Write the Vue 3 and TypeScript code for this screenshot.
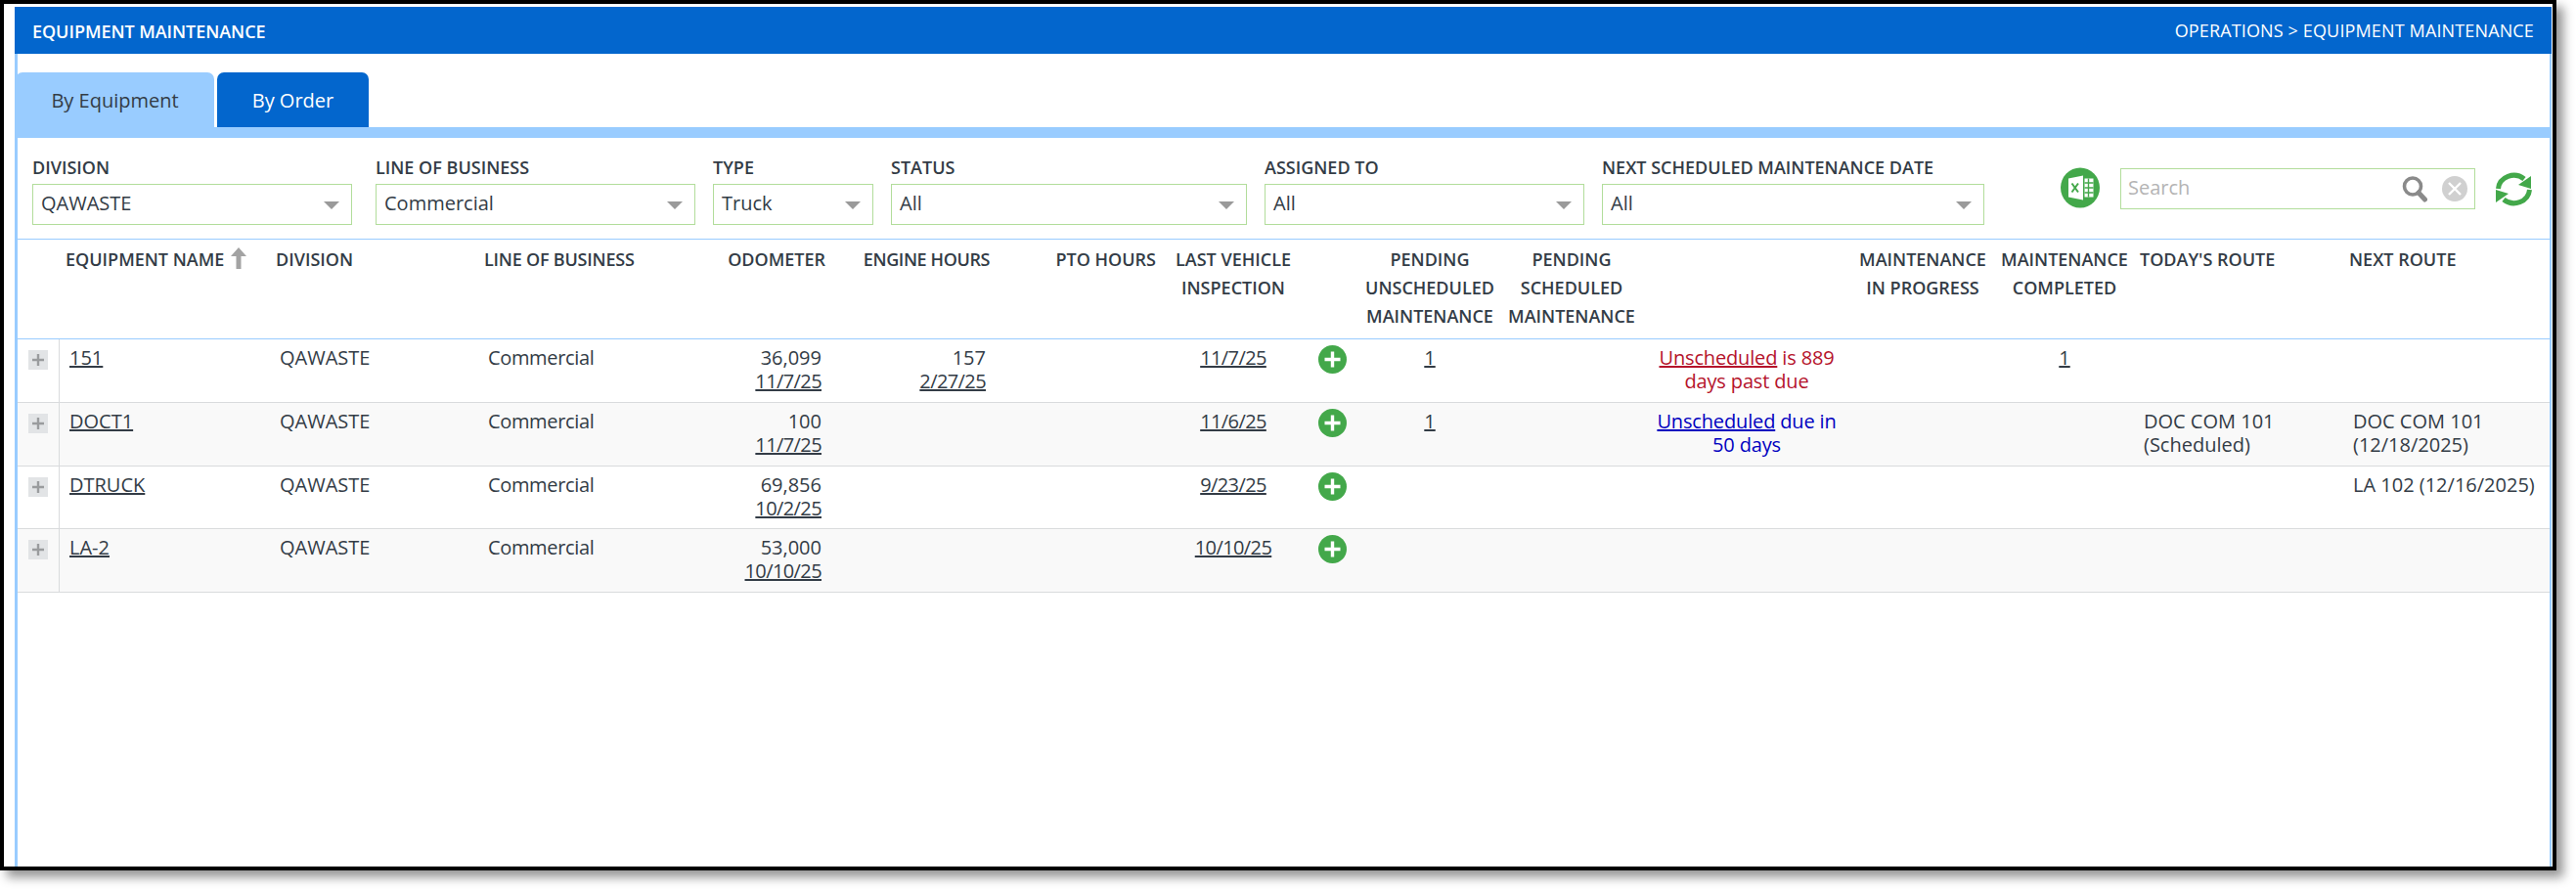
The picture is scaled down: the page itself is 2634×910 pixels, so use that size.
<script setup lang="ts">
interface Filter { label: string; value: string; cls: string }
interface Row {
  name: string; odometer: string; odoDate: string; engine?: string; engineDate?: string;
  inspection: string; pending?: string; linkText?: string; restText?: string; tone?: string;
  completed?: string; today?: string; next?: string;
}
const filters: Filter[] = [
  { label: 'DIVISION', value: 'QAWASTE', cls: 'f-division' },
  { label: 'LINE OF BUSINESS', value: 'Commercial', cls: 'f-wide' },
  { label: 'TYPE', value: 'Truck', cls: 'f-type' },
  { label: 'STATUS', value: 'All', cls: 'f-status' },
  { label: 'ASSIGNED TO', value: 'All', cls: 'f-wide' },
  { label: 'NEXT SCHEDULED MAINTENANCE DATE', value: 'All', cls: 'f-date' },
];
const rows: Row[] = [
  { name: '151', odometer: '36,099', odoDate: '11/7/25', engine: '157', engineDate: '2/27/25', inspection: '11/7/25', pending: '1', linkText: 'Unscheduled', restText: ' is 889 days past due', tone: 'late', completed: '1' },
  { name: 'DOCT1', odometer: '100', odoDate: '11/7/25', inspection: '11/6/25', pending: '1', linkText: 'Unscheduled', restText: ' due in 50 days', tone: 'soon', today: 'DOC COM 101 (Scheduled)', next: 'DOC COM 101 (12/18/2025)' },
  { name: 'DTRUCK', odometer: '69,856', odoDate: '10/2/25', inspection: '9/23/25', next: 'LA 102 (12/16/2025)' },
  { name: 'LA-2', odometer: '53,000', odoDate: '10/10/25', inspection: '10/10/25' },
];
</script>

<template>
  <div class="page">
    <div class="frame">
      <header class="titlebar">
        <span class="title">EQUIPMENT MAINTENANCE</span>
        <span class="crumb">OPERATIONS &gt; EQUIPMENT MAINTENANCE</span>
      </header>
      <main class="panel">
        <nav class="tabs">
          <div class="tab tab-active">By Equipment</div>
          <div class="tab">By Order</div>
        </nav>
        <div class="strip"></div>
        <section class="filters">
          <div v-for="f in filters" :key="f.label" class="filter" :class="f.cls">
            <label class="flabel">{{ f.label }}</label>
            <div class="select"><span class="sval">{{ f.value }}</span><i class="caret"></i></div>
          </div>
          <div class="tools">
            <svg class="excel" viewBox="0 0 40 42" width="40" height="42">
              <ellipse cx="20" cy="21" rx="20" ry="20.5" fill="#43a84a" />
              <path d="M8 11.5 L23 8.5 V33.5 L8 30.5 Z" fill="#fff" />
              <rect x="24.5" y="11.5" width="9" height="19" fill="#fff" />
              <path d="M24.5 16h9M24.5 21h9M24.5 26h9M28.5 11.5v19" stroke="#43a84a" stroke-width="1.4" />
              <path d="M11.5 16.5 L18 25.5 M18 16.5 L11.5 25.5" stroke="#43a84a" stroke-width="2" fill="none" />
            </svg>
            <div class="search">
              <span class="placeholder">Search</span>
              <svg class="mag" viewBox="0 0 26 28" width="26" height="28">
                <circle cx="11" cy="11.5" r="8.5" fill="none" stroke="#8a8a8a" stroke-width="3.6" />
                <path d="M17 18 L23.5 25" stroke="#8a8a8a" stroke-width="5" stroke-linecap="round" />
              </svg>
              <svg class="clear" viewBox="0 0 26 26" width="26" height="26">
                <circle cx="13" cy="13" r="13" fill="#d0d0d0" />
                <path d="M7 7 L19 19 M19 7 L7 19" stroke="#fff" stroke-width="2.4" />
              </svg>
            </div>
            <svg class="refresh" viewBox="0 0 37 35" width="37" height="35">
              <path d="M2.5 17 A16 15 0 0 1 29 7" fill="none" stroke="#43a84a" stroke-width="5" />
              <path d="M36 4 V17 L23 13 Z" fill="#43a84a" />
              <path d="M34.5 18 A16 15 0 0 1 8 28" fill="none" stroke="#43a84a" stroke-width="5" />
              <path d="M0 31 V18 L13 22 Z" fill="#43a84a" />
            </svg>
          </div>
        </section>
        <table class="grid">
          <colgroup>
            <col style="width:43px" /><col style="width:214px" /><col style="width:213px" /><col style="width:212px" />
            <col style="width:151px" /><col style="width:168px" /><col style="width:170px" /><col style="width:144px" />
            <col style="width:58px" /><col style="width:142px" /><col style="width:148px" /><col style="width:210px" />
            <col style="width:150px" /><col style="width:140px" /><col style="width:214px" /><col style="width:212px" />
          </colgroup>
          <thead>
            <tr>
              <th></th>
              <th class="sorted">EQUIPMENT NAME
                <svg class="sort" viewBox="0 0 16 22" width="16" height="22"><path d="M8 0 L16 9 H10.5 V22 H5.5 V9 H0 Z" fill="#a3a3a3" /></svg>
              </th>
              <th>DIVISION</th>
              <th class="th-lob">LINE OF BUSINESS</th>
              <th class="r">ODOMETER</th>
              <th class="r th-engine">ENGINE HOURS</th>
              <th class="r">PTO HOURS</th>
              <th class="c">LAST VEHICLE INSPECTION</th>
              <th></th>
              <th class="c">PENDING UNSCHEDULED MAINTENANCE</th>
              <th class="c">PENDING SCHEDULED MAINTENANCE</th>
              <th></th>
              <th class="c">MAINTENANCE IN PROGRESS</th>
              <th class="c">MAINTENANCE COMPLETED</th>
              <th>TODAY'S ROUTE</th>
              <th>NEXT ROUTE</th>
            </tr>
          </thead>
          <tbody>
            <tr v-for="(r, i) in rows" :key="r.name" :class="{ alt: i % 2 === 1, short: i === 2 }">
              <td class="exp">
                <span class="expander"><svg viewBox="0 0 20 20" width="20" height="20"><path d="M10 4 V16 M4 10 H16" stroke="#9a9c9e" stroke-width="2.4" /></svg></span>
              </td>
              <td class="name"><a class="u">{{ r.name }}</a></td>
              <td>QAWASTE</td>
              <td class="tight">Commercial</td>
              <td class="r">{{ r.odometer }}<br /><a class="u date">{{ r.odoDate }}</a></td>
              <td class="r"><template v-if="r.engine">{{ r.engine }}<br /><a class="u date">{{ r.engineDate }}</a></template></td>
              <td></td>
              <td class="c"><a class="u date">{{ r.inspection }}</a></td>
              <td class="c icon">
                <svg viewBox="0 0 29 29" width="29" height="29"><circle cx="14.5" cy="14.5" r="14.5" fill="#43a84a" /><path d="M14.5 6.5 V22.5 M6.5 14.5 H22.5" stroke="#fff" stroke-width="3.4" /></svg>
              </td>
              <td class="c"><a v-if="r.pending" class="u">{{ r.pending }}</a></td>
              <td></td>
              <td class="c msg" :class="r.tone"><template v-if="r.linkText"><a class="u">{{ r.linkText }}</a>{{ r.restText }}</template></td>
              <td></td>
              <td class="c"><a v-if="r.completed" class="u">{{ r.completed }}</a></td>
              <td>{{ r.today }}</td>
              <td>{{ r.next }}</td>
            </tr>
          </tbody>
        </table>
      </main>
    </div>
  </div>
</template>

<style>
html, body { margin: 0; background: #fff; }
</style>

<style scoped>
.page { width: 2634px; height: 910px; background: #fff; overflow: hidden; font-family: "Open Sans", "Noto Sans", sans-serif; color: #333c46; }
.frame {
  box-sizing: border-box; width: 2614px; height: 890px; border: 4px solid #000;
  padding: 3px 1px 0 11px; background: #fff; display: flex; flex-direction: column;
  box-shadow: 7px 7px 10px rgba(0, 0, 0, .42);
}
.titlebar { height: 48px; flex: none; background: #0366cd; color: #fff; display: flex; justify-content: space-between; padding: 0 18px; box-sizing: border-box; }
.title { font-size: 18px; font-weight: 600; line-height: 51px; letter-spacing: -0.05px; }
.crumb { font-size: 18px; font-weight: 500; line-height: 48px; letter-spacing: 0.14px; }
.panel { flex: 1; min-height: 0; border-left: 3px solid #99ccff; border-right: 2px solid #99ccff; background: #fff; }
.tabs { display: flex; gap: 3px; padding: 19px 0 0; margin-left: -2px; height: 75px; box-sizing: border-box; }
.tab { height: 56px; border-radius: 7px 7px 0 0; background: #0366cd; color: #fff; font-size: 20px; line-height: 58px; font-weight: 400; box-sizing: border-box; width: 155px; text-align: center; white-space: nowrap; }
.tab-active { background: #99ccff; color: #333c46; width: 203px; }
.strip { height: 11px; background: #99ccff; }
.filters { height: 104px; display: flex; box-sizing: border-box; padding: 21px 0 0 15px; gap: 18px; border-bottom: 1px solid #99ccff; }
.filter { display: flex; flex-direction: column; }
.flabel { font-size: 18px; font-weight: 600; line-height: 18px; height: 26px; color: #333c46; }
.select { height: 42px; box-sizing: border-box; border: 1px solid #b2dd9b; display: flex; align-items: center; justify-content: space-between; padding: 0 12px 0 8px; font-size: 20px; }
.sval { margin-top: -3px; }
.caret { width: 0; height: 0; border-left: 8px solid transparent; border-right: 8px solid transparent; border-top: 8px solid #9a9a9a; margin-top: 2px; }
.f-division { width: 327px; margin-right: 6px; }
.f-wide { width: 327px; }
.f-type { width: 164px; }
.f-status { width: 364px; }
.f-date { width: 391px; }
.tools { display: flex; align-items: flex-start; margin-left: 60px; }
.excel { margin-top: 9px; }
.search { margin: 10px 0 0 21px; box-sizing: border-box; width: 363px; height: 42px; border: 1px solid #b2dd9b; display: flex; align-items: center; padding: 0 7px; }
.placeholder { flex: 1; font-size: 20px; color: #b4b4b4; margin-top: -3px; }
.mag { margin-right: 15px; }
.refresh { margin: 14px 0 0 21px; }
.grid { border-collapse: separate; border-spacing: 0; table-layout: fixed; width: 2589px; font-size: 20px; line-height: 24px; }
.grid th { height: 102px; box-sizing: border-box; vertical-align: top; padding: 6px 7px 0; font-size: 18px; line-height: 29px; font-weight: 600; text-align: left; border-bottom: 1px solid #99ccff; color: #333c46; }
.grid td { height: 65px; box-sizing: border-box; vertical-align: top; padding: 7px 11px 0; border-bottom: 1px solid #d9dbdd; text-align: left; }
.grid tr.short td { height: 64px; }
.grid tr.alt td { background: #f9f9f9; }
.grid th.r { text-align: right; }
.grid th.c, .grid td.c { text-align: center; padding-left: 4px; padding-right: 4px; }
.grid td.r { text-align: right; }
.grid th.sorted { white-space: nowrap; padding-left: 6px; }
.th-lob { letter-spacing: -0.22px; }
.th-engine { letter-spacing: -0.4px; }
.sort { vertical-align: -3px; margin-left: 2px; }
.grid td.name { padding-left: 10px; }
.grid td.exp { padding: 11px 0 0 11px; border-right: 1px solid #d9dbdd; }
.expander { display: block; width: 20px; height: 20px; background: #e2e4e6; }
.expander svg { display: block; }
.grid td.icon { padding-top: 6px; }
.icon svg { display: block; margin: 0 auto; }
.u { text-decoration: underline; color: inherit; }
.date { letter-spacing: -0.6px; }
.tight { letter-spacing: -0.35px; }
.msg { letter-spacing: -0.15px; }
.late { color: #b5132b; }
.soon { color: #0000c0; }
</style>
